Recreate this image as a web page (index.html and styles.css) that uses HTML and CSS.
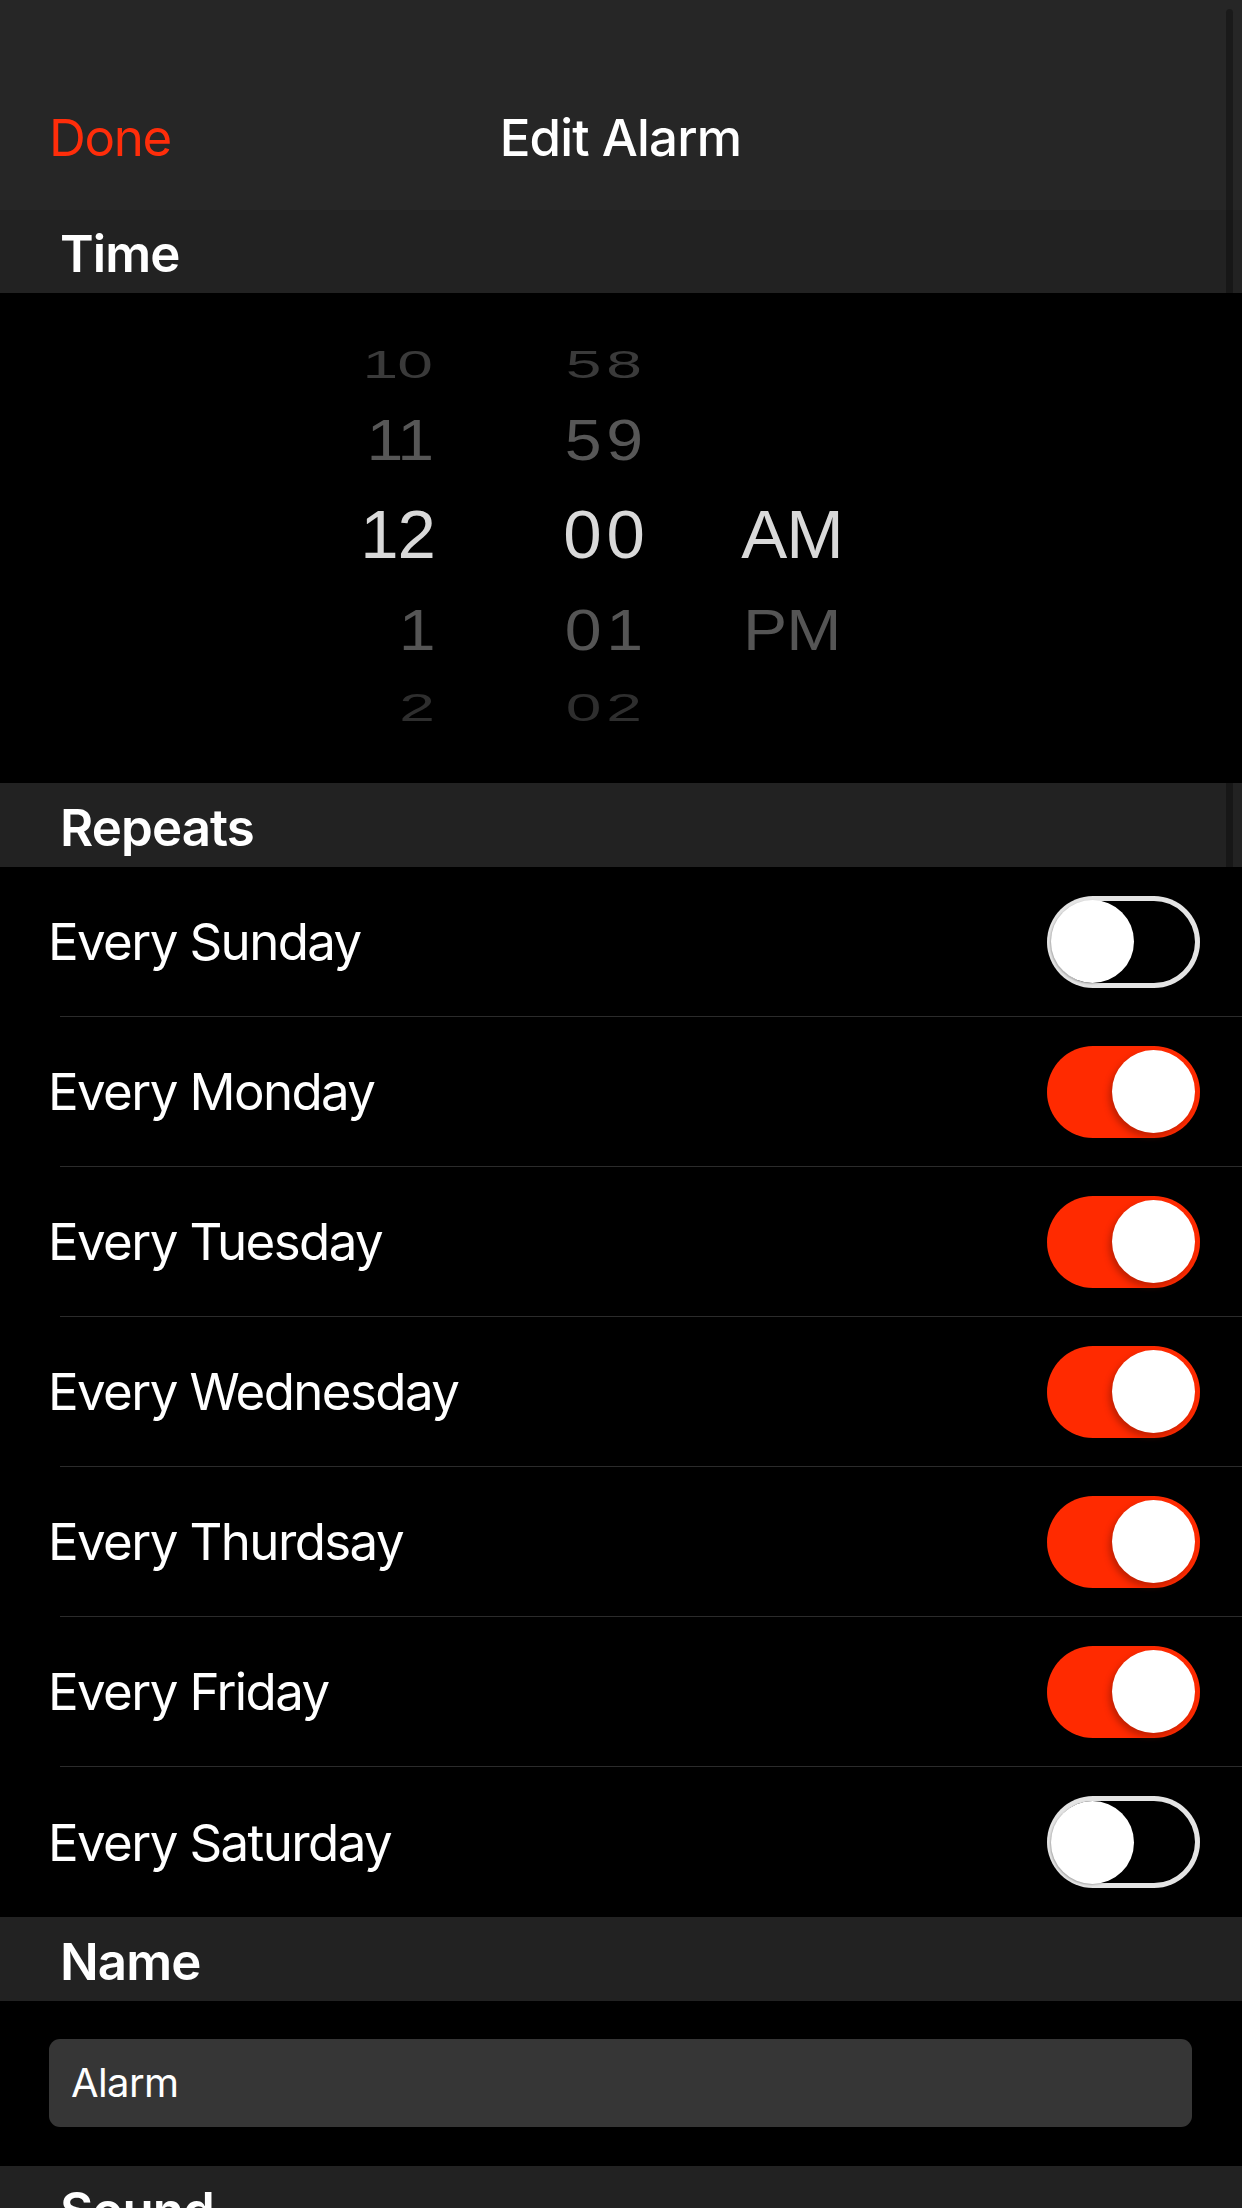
FILE: index.html
```html
<!DOCTYPE html>
<html lang="en">
<head>
<meta charset="utf-8">
<title>Edit Alarm</title>
<link rel="stylesheet" href="styles.css">
</head>
<body>
<div class="screen">
  <header class="nav">
    <div class="nav-bar">
      <span class="nav-done">Done</span>
      <span class="nav-title">Edit Alarm</span>
      <span class="nav-spacer"></span>
    </div>
  </header>

  <div class="section-header section-header-time"><span>Time</span></div>

  <div class="picker">
    <div class="col col-hour">
      <div class="cell cell-far-top"><span>10</span></div>
      <div class="cell cell-near-top"><span>11</span></div>
      <div class="cell cell-selected"><span>12</span></div>
      <div class="cell cell-near-bottom"><span>1</span></div>
      <div class="cell cell-far-bottom"><span>2</span></div>
    </div>
    <div class="col col-min">
      <div class="cell cell-far-top"><span>58</span></div>
      <div class="cell cell-near-top"><span>59</span></div>
      <div class="cell cell-selected"><span>00</span></div>
      <div class="cell cell-near-bottom"><span>01</span></div>
      <div class="cell cell-far-bottom"><span>02</span></div>
    </div>
    <div class="col col-ampm">
      <div class="cell cell-far-top"><span></span></div>
      <div class="cell cell-near-top"><span></span></div>
      <div class="cell cell-selected"><span>AM</span></div>
      <div class="cell cell-near-bottom"><span>PM</span></div>
      <div class="cell cell-far-bottom"><span></span></div>
    </div>
  </div>

  <div class="section-header"><span>Repeats</span></div>

  <div class="list">
    <div class="row"><span class="row-label">Every Sunday</span><span class="switch"><span class="knob"></span></span></div>
    <div class="sep"></div>
    <div class="row"><span class="row-label">Every Monday</span><span class="switch switch-on"><span class="knob"></span></span></div>
    <div class="sep"></div>
    <div class="row"><span class="row-label">Every Tuesday</span><span class="switch switch-on"><span class="knob"></span></span></div>
    <div class="sep"></div>
    <div class="row"><span class="row-label">Every Wednesday</span><span class="switch switch-on"><span class="knob"></span></span></div>
    <div class="sep"></div>
    <div class="row"><span class="row-label">Every Thurdsay</span><span class="switch switch-on"><span class="knob"></span></span></div>
    <div class="sep"></div>
    <div class="row"><span class="row-label">Every Friday</span><span class="switch switch-on"><span class="knob"></span></span></div>
    <div class="sep"></div>
    <div class="row row-last"><span class="row-label">Every Saturday</span><span class="switch"><span class="knob"></span></span></div>
  </div>

  <div class="section-header"><span>Name</span></div>

  <div class="name-area">
    <div class="text-field">Alarm</div>
  </div>

  <div class="section-header"><span>Sound</span></div>

  <div class="scroll-indicator"></div>
</div>
</body>
</html>
```

FILE: styles.css
```css
html, body {
  margin: 0;
  padding: 0;
  background: #000;
}

body {
  width: 1242px;
  height: 2208px;
  overflow: hidden;
  font-family: Inter, "Liberation Sans", "Noto Sans", sans-serif;
  color: #fff;
}

.screen {
  position: relative;
  width: 1242px;
  height: 2208px;
  overflow: hidden;
  background: #000;
}

/* Navigation bar */
.nav {
  height: 210px;
  background: #262626;
  box-sizing: border-box;
  padding-top: 64px;
}

.nav-bar {
  height: 146px;
  display: grid;
  grid-template-columns: 1fr auto 1fr;
  align-items: center;
  padding: 0 46px 0 49px;
}

.nav-done {
  color: #ff2d0a;
  font-size: 51px;
  line-height: 1;
  letter-spacing: -1.3px;
  justify-self: start;
}

.nav-title {
  font-size: 51px;
  line-height: 1;
  font-weight: 500;
  letter-spacing: -0.8px;
  color: #fff;
  transform: translateX(-2px);
}

/* Section headers */
.section-header {
  height: 84px;
  background: #222222;
  display: flex;
  align-items: center;
  padding: 4px 0 0 60px;
  box-sizing: border-box;
}

.section-header-time {
  height: 83px;
}

.section-header span {
  font-size: 51px;
  line-height: 1;
  font-weight: 600;
  letter-spacing: -0.9px;
}

/* Time picker */
.picker {
  height: 490px;
  box-sizing: border-box;
  padding-top: 34px;
  display: flex;
  background: #000;
  font-family: "Liberation Sans", Arial, sans-serif;
}

.col {
  display: flex;
  flex-direction: column;
  width: 160px;
}

.col-hour {
  margin-left: 275px;
  align-items: flex-end;
}

.col-min {
  margin-left: 89px;
  align-items: center;
}

.col-min .cell span {
  letter-spacing: 5px;
  padding-left: 5px;
}

.col-ampm {
  margin-left: 28px;
  align-items: center;
}

.cell {
  display: flex;
  align-items: center;
}

.cell span {
  display: block;
  font-size: 69px;
  line-height: 1;
  letter-spacing: -1px;
}

.cell-far-top { height: 76px; }
.cell-near-top { height: 74px; }
.cell-selected { height: 114px; }
.cell-near-bottom { height: 78px; }
.cell-far-bottom { height: 78px; }

.cell-far-top span {
  color: #3a3a3a;
  transform: scale(0.93, 0.55);
}

.cell-near-top span {
  color: #575757;
  transform: scale(0.96, 0.84);
}

.cell-selected span {
  color: #d9d9d9;
}

.cell-near-bottom span {
  color: #555555;
  transform: scale(0.96, 0.82);
}

.cell-far-bottom span {
  color: #2e2e2e;
  transform: scale(0.93, 0.55);
}

/* Repeat list */
.list {
  display: flex;
  flex-direction: column;
}

.row {
  height: 149px;
  display: flex;
  align-items: center;
  justify-content: space-between;
  padding: 0 42px 0 48px;
}

.row-last {
  height: 150px;
}

.row-label {
  font-size: 51px;
  line-height: 1;
  letter-spacing: -1.6px;
  color: #fff;
}

.sep {
  height: 1px;
  margin-left: 60px;
  background: #2b2b2b;
}

.switch {
  width: 153px;
  height: 92px;
  box-sizing: border-box;
  border-radius: 46px;
  display: flex;
  align-items: center;
  justify-content: flex-start;
  padding: 0 5px 0 4px;
  background: #000;
  box-shadow: inset 0 0 0 5px #e4e4e4;
}

.switch-on {
  background: #ff2a00;
  box-shadow: none;
  justify-content: flex-end;
}

.knob {
  width: 83px;
  height: 83px;
  border-radius: 50%;
  background: #fff;
  box-shadow: -1px 1px 2px rgba(0, 0, 0, 0.25);
}

.switch-on .knob {
  box-shadow: -3px 4px 6px rgba(120, 20, 0, 0.45);
}

/* Name */
.name-area {
  height: 165px;
  box-sizing: border-box;
  padding: 38px 50px 0 49px;
}

.text-field {
  height: 88px;
  border-radius: 11px;
  background: #363636;
  display: flex;
  align-items: center;
  padding: 0 0 0 22px;
  font-size: 40px;
  line-height: 1;
  letter-spacing: -0.6px;
  color: #fff;
}

/* Scroll indicator overlay */
.scroll-indicator {
  position: absolute;
  top: 9px;
  left: 1226px;
  width: 7px;
  height: 880px;
  border-radius: 4px;
  background: rgba(0, 0, 0, 0.3);
}
```
